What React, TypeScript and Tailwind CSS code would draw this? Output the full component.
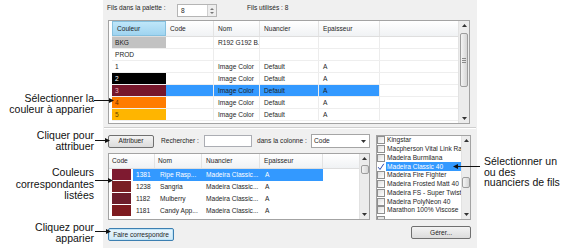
import React from 'react';

type PaletteRow = {
  label: string;
  swatch: string;
  ink: string;
  nom: string;
  nuancier: string;
  ep: string;
  selected?: boolean;
};

const palette: PaletteRow[] = [
  { label: 'BKG', swatch: 'bg-[#c2c2c2]', ink: 'text-[#222]', nom: 'R192 G192 B.', nuancier: '', ep: '' },
  { label: 'PROD', swatch: 'bg-white', ink: 'text-[#222]', nom: '', nuancier: '', ep: '' },
  { label: '1', swatch: 'bg-white', ink: 'text-[#222]', nom: 'Image Color', nuancier: 'Default', ep: 'A' },
  { label: '2', swatch: 'bg-black', ink: 'text-white', nom: 'Image Color', nuancier: 'Default', ep: 'A' },
  { label: '3', swatch: 'bg-[#76162b]', ink: 'text-[#f0b4bd]', nom: 'Image Color', nuancier: 'Default', ep: 'A', selected: true },
  { label: '4', swatch: 'bg-[#ff7c00]', ink: 'text-[#6b2e00]', nom: 'Image Color', nuancier: 'Default', ep: 'A' },
  { label: '5', swatch: 'bg-[#ffb500]', ink: 'text-[#6b4500]', nom: 'Image Color', nuancier: 'Default', ep: 'A' },
];

const matches = [
  { code: '1381', nom: 'Ripe Rasp...', swatch: 'bg-[#7e1a30]', selected: true },
  { code: '1238', nom: 'Sangria', swatch: 'bg-[#7a1f24]' },
  { code: '1182', nom: 'Mulberry', swatch: 'bg-[#6d1d2b]' },
  { code: '1181', nom: 'Candy App...', swatch: 'bg-[#7d1a1f]' },
];

const charts = [
  { name: 'Kingstar' },
  { name: 'Macpherson Vital Link Ra' },
  { name: 'Madeira Burmilana' },
  { name: 'Madeira Classic 40', checked: true },
  { name: 'Madeira Fire Fighter' },
  { name: 'Madeira Frosted Matt 40' },
  { name: 'Madeira FS - Super Twist' },
  { name: 'Madeira PolyNeon 40' },
  { name: 'Marathon 100% Viscose' },
];

const Tri = ({ down }: { down?: boolean }) => (
  <svg width="5" height="3" viewBox="0 0 5 3" className="block">
    <path d={down ? 'M0 0H5L2.5 3Z' : 'M0 3H5L2.5 0Z'} fill="#333" />
  </svg>
);

const Thumb = ({ h, mt, grip }: { h: number; mt: number; grip?: boolean }) => (
  <div
    className="mx-auto w-[8px] rounded-[2px] border border-[#9d9d9d] bg-gradient-to-r from-[#f4f4f4] to-[#d6d6d6] flex flex-col items-center justify-center gap-[1px]"
    style={{ height: h, marginTop: mt }}
  >
    {grip && (
      <>
        <div className="w-[4px] h-px bg-[#8a8a8a]" />
        <div className="w-[4px] h-px bg-[#8a8a8a]" />
        <div className="w-[4px] h-px bg-[#8a8a8a]" />
      </>
    )}
  </div>
);

const VScroll = ({ w, thumbTop, thumbH, grip }: { w: number; thumbTop: number; thumbH: number; grip?: boolean }) => (
  <div className="flex flex-col h-full bg-[#ececec] border-l border-[#e2e2e2]" style={{ width: w }}>
    <div className="h-[9px] flex items-center justify-center">
      <Tri />
    </div>
    <Thumb h={thumbH} mt={thumbTop} grip={grip} />
    <div className="flex-1" />
    <div className="h-[9px] flex items-center justify-center">
      <Tri down />
    </div>
  </div>
);

const Head = ({ w, children, pl = 'pl-[4px]' }: { w: string; children?: React.ReactNode; pl?: string }) => (
  <div className={`${w} ${pl} h-full flex items-center border-r border-[#e3e3e3] shrink-0`}>{children}</div>
);

export default function App() {
  return (
    <div className="relative w-[567px] h-[248px] bg-white overflow-hidden flex font-['Liberation_Sans',Arial,sans-serif] text-[#1e1e1e]">
      {/* left callouts */}
      <div className="w-[103px] shrink-0 text-right pr-[9px] text-[10.5px] leading-[11px] text-[#111]">
        <div className="mt-[93px]">
          <div>Sélectionner la</div>
          <div>couleur à apparier</div>
        </div>
        <div className="mt-[15px]">
          <div>Cliquer pour</div>
          <div>attribuer</div>
        </div>
        <div className="mt-[15px] leading-[11.5px]">
          <div>Couleurs</div>
          <div>correspondantes</div>
          <div>listées</div>
        </div>
        <div className="mt-[20px]">
          <div>Cliquez pour</div>
          <div>apparier</div>
        </div>
      </div>

      {/* dialog */}
      <div className="w-[374px] shrink-0 h-full bg-[#f0f0f0] text-[6.6px] leading-[8px]">
        {/* palette count */}
        <div className="h-[20px] pt-[4px] pl-[4px] flex items-start">
          <div className="w-[70px]">Fils dans la palette :</div>
          <div className="w-[40px] h-[13px] bg-white border border-[#b5b5b5] flex">
            <div className="flex-1 pl-[3px] pt-[2px]">8</div>
            <div className="w-[9px] border-l border-[#cfcfcf] bg-[#eeeeee] flex flex-col items-center justify-center gap-[2px]">
              <svg width="4" height="2" viewBox="0 0 4 2"><path d="M0 2H4L2 0Z" fill="#777" /></svg>
              <svg width="4" height="2" viewBox="0 0 4 2"><path d="M0 0H4L2 2Z" fill="#777" /></svg>
            </div>
          </div>
          <div className="ml-[30px]">Fils utilisés : 8</div>
        </div>

        {/* palette table */}
        <div className="ml-[5px] w-[362px] h-[104px] border border-[#a3a3a3] bg-white flex">
          <div className="flex-1 pl-[3px] flex flex-col">
            <div className="h-[16px] flex bg-gradient-to-b from-white to-[#f0f2f4] border-b border-[#dedede]">
              <div className="w-[54px] shrink-0 h-full pl-[4px] flex items-center bg-gradient-to-b from-[#bfe6f9] to-[#9fd4f0] border border-[#86c1df]">
                Couleur
              </div>
              <Head w="w-[48px]">Code</Head>
              <Head w="w-[46px]">Nom</Head>
              <Head w="w-[59px]">Nuancier</Head>
              <Head w="w-[61px]">Epaisseur</Head>
              <div className="flex-1" />
            </div>
            {palette.map((r) => (
              <div key={r.label} className="h-[12px] flex border-b border-[#eeeeee]">
                <div className={`w-[54px] shrink-0 ${r.swatch} ${r.ink} pl-[3px] flex items-center`}>{r.label}</div>
                <div className={`w-[48px] shrink-0 border-r border-[#ececec] ${r.selected ? 'bg-[#3399ff]' : ''}`} />
                <div className={`w-[46px] shrink-0 pl-[4px] flex items-center border-r border-[#ececec] whitespace-nowrap overflow-hidden ${r.selected ? 'bg-[#3399ff]' : ''}`}>{r.nom}</div>
                <div className={`w-[59px] shrink-0 pl-[4px] flex items-center border-r border-[#ececec] ${r.selected ? 'bg-[#3399ff]' : ''}`}>{r.nuancier}</div>
                <div className={`w-[61px] shrink-0 pl-[4px] flex items-center border-r border-[#ececec] ${r.selected ? 'bg-[#3399ff]' : ''}`}>{r.ep}</div>
                <div className="flex-1" />
              </div>
            ))}
          </div>
          <VScroll w={11} thumbTop={3} thumbH={54} grip />
        </div>

        {/* separator */}
        <div className="mt-[3px] mx-[1px] h-[2px] border-t border-[#cfcfcf] border-b border-b-white" />

        {/* middle */}
        <div className="mt-[5px] pl-[5px] flex">
          <div className="w-[262px] shrink-0">
            <div className="h-[14px] flex items-center">
              <div className="w-[46px] h-[13px] flex items-center justify-center rounded-[2px] border border-[#707070] bg-gradient-to-b from-[#f3f3f3] to-[#dcdcdc]">
                Attribuer
              </div>
              <div className="ml-[7px] w-[43px]">Rechercher :</div>
              <div className="w-[48px] h-[12px] bg-white border border-[#abadb3]" />
              <div className="ml-[5px] w-[54px] whitespace-nowrap">dans la colonne :</div>
              <div className="w-[59px] h-[14px] bg-white border border-[#a5a5a5] flex items-center pl-[2px] pr-[3px] justify-between">
                <span>Code</span>
                <Tri down />
              </div>
            </div>

            {/* matching colors */}
            <div className="mt-[5px] w-[262px] h-[67px] border border-[#a3a3a3] bg-white flex">
              <div className="flex-1 flex flex-col">
                <div className="h-[15px] flex bg-gradient-to-b from-white to-[#f0f2f4] border-b border-[#dedede]">
                  <Head w="w-[46px]" pl="pl-[3px]">Code</Head>
                  <Head w="w-[47px]" pl="pl-[3px]">Nom</Head>
                  <Head w="w-[58px]">Nuancier</Head>
                  <Head w="w-[63px]">Epaisseur</Head>
                  <div className="flex-1" />
                </div>
                {matches.map((m) => {
                  const sel = m.selected ? 'bg-[#3399ff] text-white' : '';
                  return (
                    <div key={m.code} className="h-[12px] flex">
                      <div className="w-[46px] shrink-0 flex">
                        <div className={`ml-[3px] w-[19px] h-[11px] ${m.swatch}`} />
                        <div className={`ml-[2px] flex-1 pl-[3px] flex items-center ${sel}`}>{m.code}</div>
                      </div>
                      <div className={`w-[47px] shrink-0 pl-[5px] flex items-center whitespace-nowrap ${sel}`}>{m.nom}</div>
                      <div className={`w-[58px] shrink-0 pl-[4px] flex items-center whitespace-nowrap ${sel}`}>Madeira Classic...</div>
                      <div className={`w-[63px] shrink-0 pl-[5px] flex items-center ${sel}`}>A</div>
                      <div className="flex-1" />
                    </div>
                  );
                })}
              </div>
              <VScroll w={10} thumbTop={2} thumbH={9} />
            </div>
          </div>

          {/* thread charts */}
          <div className="ml-[6px] mt-[1px] w-[95px] h-[85px] border border-[#a3a3a3] bg-white flex overflow-hidden">
            <div className="flex-1 flex flex-col overflow-hidden">
              {charts.map((c) => (
                <div key={c.name} className="h-[8.75px] shrink-0 flex items-center whitespace-nowrap">
                  {c.checked ? (
                    <svg width="8" height="8" viewBox="0 0 8 8" className="shrink-0">
                      <path d="M1.2 4.2L3 6.5L6.8 0.8" fill="none" stroke="#2a4bb0" strokeWidth="1" />
                    </svg>
                  ) : (
                    <div className="w-[8px] h-[8px] shrink-0 border border-[#8f8f8f] bg-gradient-to-br from-[#dedede] to-white" />
                  )}
                  <div className={`ml-[1px] flex-1 h-full pl-[1px] flex items-center overflow-hidden ${c.checked ? 'bg-[#3399ff] text-white' : ''}`}>
                    {c.name}
                  </div>
                </div>
              ))}
              <div className="mt-[1px] w-[8px] h-[4px] shrink-0 border border-b-0 border-[#8f8f8f] bg-[#e6e6e6]" />
            </div>
            <VScroll w={9} thumbTop={32} thumbH={11} />
          </div>
        </div>

        {/* bottom buttons */}
        <div className="mt-[6px] pl-[5px] pr-[6px] flex justify-between items-start">
          <div className="mt-[2px] w-[66px] h-[13px] flex items-center justify-center rounded-[2px] border border-[#3c7fb1] bg-gradient-to-b from-[#eaf6fd] to-[#d0e9f7] shadow-[inset_0_0_0_1px_#bfe3f6]">
            Faire correspondre
          </div>
          <div className="w-[60px] h-[13px] flex items-center justify-center rounded-[2px] border border-[#707070] bg-gradient-to-b from-[#f3f3f3] to-[#dcdcdc]">
            Gérer...
          </div>
        </div>
      </div>

      {/* right callout */}
      <div className="flex-1 pl-[7px] pt-[156px] text-[10.5px] leading-[10.5px] text-[#111]">
        <div>Sélectionner un</div>
        <div>ou des</div>
        <div>nuanciers de fils</div>
      </div>

      {/* leader lines */}
      <svg className="absolute inset-0 pointer-events-none" width="567" height="248" viewBox="0 0 567 248">
        <g stroke="#111" strokeWidth="1">
          <line x1="94" y1="100.5" x2="110" y2="100.5" />
          <line x1="95" y1="140.5" x2="106" y2="140.5" />
          <line x1="95" y1="180.5" x2="109" y2="180.5" />
          <line x1="95" y1="231.5" x2="107" y2="231.5" />
          <line x1="480" y1="166.5" x2="457" y2="166.5" />
        </g>
        <g fill="#111">
          <path d="M114 100.5L109 98V103Z" />
          <path d="M110 140.5L105 138V143Z" />
          <path d="M113 180.5L108 178V183Z" />
          <path d="M111 231.5L106 229V234Z" />
          <path d="M453 166.5L458 164V169Z" />
        </g>
      </svg>
    </div>
  );
}
